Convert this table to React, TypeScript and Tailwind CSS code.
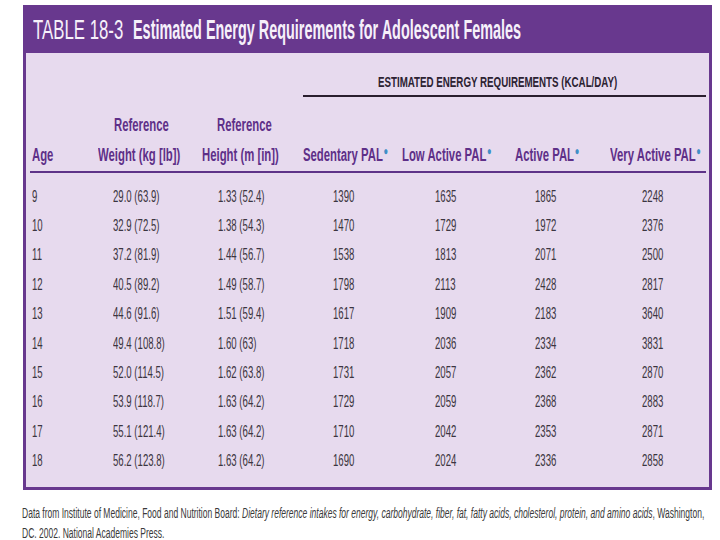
const rows = [
  ["9", "29.0 (63.9)", "1.33 (52.4)", "1390", "1635", "1865", "2248"],
  ["10", "32.9 (72.5)", "1.38 (54.3)", "1470", "1729", "1972", "2376"],
  ["11", "37.2 (81.9)", "1.44 (56.7)", "1538", "1813", "2071", "2500"],
  ["12", "40.5 (89.2)", "1.49 (58.7)", "1798", "2113", "2428", "2817"],
  ["13", "44.6 (91.6)", "1.51 (59.4)", "1617", "1909", "2183", "3640"],
  ["14", "49.4 (108.8)", "1.60 (63)", "1718", "2036", "2334", "3831"],
  ["15", "52.0 (114.5)", "1.62 (63.8)", "1731", "2057", "2362", "2870"],
  ["16", "53.9 (118.7)", "1.63 (64.2)", "1729", "2059", "2368", "2883"],
  ["17", "55.1 (121.4)", "1.63 (64.2)", "1710", "2042", "2353", "2871"],
  ["18", "56.2 (123.8)", "1.63 (64.2)", "1690", "2024", "2336", "2858"],
];

// left padding of the numbers inside each column
const cellPad = ["pl-0", "pl-[15px]", "pl-[16px]", "pl-[33px]", "pl-[35px]", "pl-[25px]", "pl-[36px]"];

const grid = "grid grid-cols-[66px_104px_98px_100px_110px_96px_100px]";

// condensed type: the source uses a compressed grotesque, so squeeze Liberation Sans
function Sq({ className = "", children }: { className?: string; children: React.ReactNode }) {
  return <span className={`inline-block whitespace-nowrap origin-left ${className}`}>{children}</span>;
}

function Star() {
  return <span className="relative -top-[6px] ml-[1px] text-[12px] text-[#3f8fc6]">●</span>;
}

function ColHead({ top, bottom, topPad = "", bottomPad = "" }: { top?: string; bottom: React.ReactNode; topPad?: string; bottomPad?: string }) {
  return (
    <div className="flex flex-col justify-end h-[60px] text-[18px] font-bold text-[#5e2f88]">
      {top && (
        <div className={`h-[30px] leading-[30px] ${topPad}`}>
          <Sq className="scale-x-[0.63]">{top}</Sq>
        </div>
      )}
      <div className={`h-[30px] leading-[30px] ${bottomPad}`}>
        <Sq className="scale-x-[0.63]">{bottom}</Sq>
      </div>
    </div>
  );
}

export default function App() {
  return (
    <div className="w-[720px] h-[540px] bg-white pt-[5px] pl-[23px] font-['Liberation_Sans',Arial,sans-serif] overflow-hidden">
      <div className="w-[689px]">
        <div className="h-[48px] bg-[#68388e] flex items-center pl-[10px] pt-[2px] text-[28px] text-[#f6f0fa]">
          <div className="w-[100px]">
            <Sq className="scale-x-[0.6]">TABLE 18-3</Sq>
          </div>
          <div>
            <Sq className="scale-x-[0.515] font-bold">Estimated Energy Requirements for Adolescent Females</Sq>
          </div>
        </div>

        <div className="h-[437px] bg-[#e7daee] border-x-[3px] border-b-[3px] border-[#68388e] pl-[6px] pt-[20px]">
          <div className="ml-[271px] w-[403px]">
            <div className="h-[18px] leading-[18px] pl-[75px] text-[15px] font-bold text-[#2c2232]">
              <Sq className="scale-x-[0.65]">ESTIMATED ENERGY REQUIREMENTS (KCAL/DAY)</Sq>
            </div>
            <div className="mt-[4px] h-[2px] bg-[#2a1e2e]" />
          </div>

          <div className={`${grid} mt-[13px]`}>
            <ColHead bottom="Age" />
            <ColHead top="Reference" bottom="Weight (kg [lb])" topPad="pl-[16px]" />
            <ColHead top="Reference" bottom="Height (m [in])" topPad="pl-[15px]" />
            <ColHead bottom={<>Sedentary PAL<Star /></>} bottomPad="pl-[3px]" />
            <ColHead bottom={<>Low Active PAL<Star /></>} bottomPad="pl-[2px]" />
            <ColHead bottom={<>Active PAL<Star /></>} bottomPad="pl-[5px]" />
            <ColHead bottom={<>Very Active PAL<Star /></>} bottomPad="pl-[4px]" />
          </div>
          <div className="mt-[1px] -ml-[2px] w-[676px] h-[2px] bg-[#5e3388]" />

          <div className="mt-[9px]">
            {rows.map((r) => (
              <div key={r[0]} className={`${grid} h-[29.4px] items-center text-[16px] leading-none text-[#3b3540]`}>
                {r.map((v, i) => (
                  <div key={i} className={cellPad[i]}>
                    <Sq className="scale-x-[0.6]">{v}</Sq>
                  </div>
                ))}
              </div>
            ))}
          </div>
        </div>
      </div>

      <div className="-ml-[1px] mt-[13px] text-[14px] leading-[20px] text-[#3a3a3a]">
        <div>
          <Sq className="scale-x-[0.608]">
            Data from Institute of Medicine, Food and Nutrition Board:{" "}
            <i>
              Dietary reference intakes for energy, carbohydrate, fiber, fat, fatty acids, cholesterol, protein, and amino
              acids
            </i>
            , Washington,
          </Sq>
        </div>
        <div>
          <Sq className="scale-x-[0.608]">DC. 2002. National Academies Press.</Sq>
        </div>
      </div>
    </div>
  );
}
